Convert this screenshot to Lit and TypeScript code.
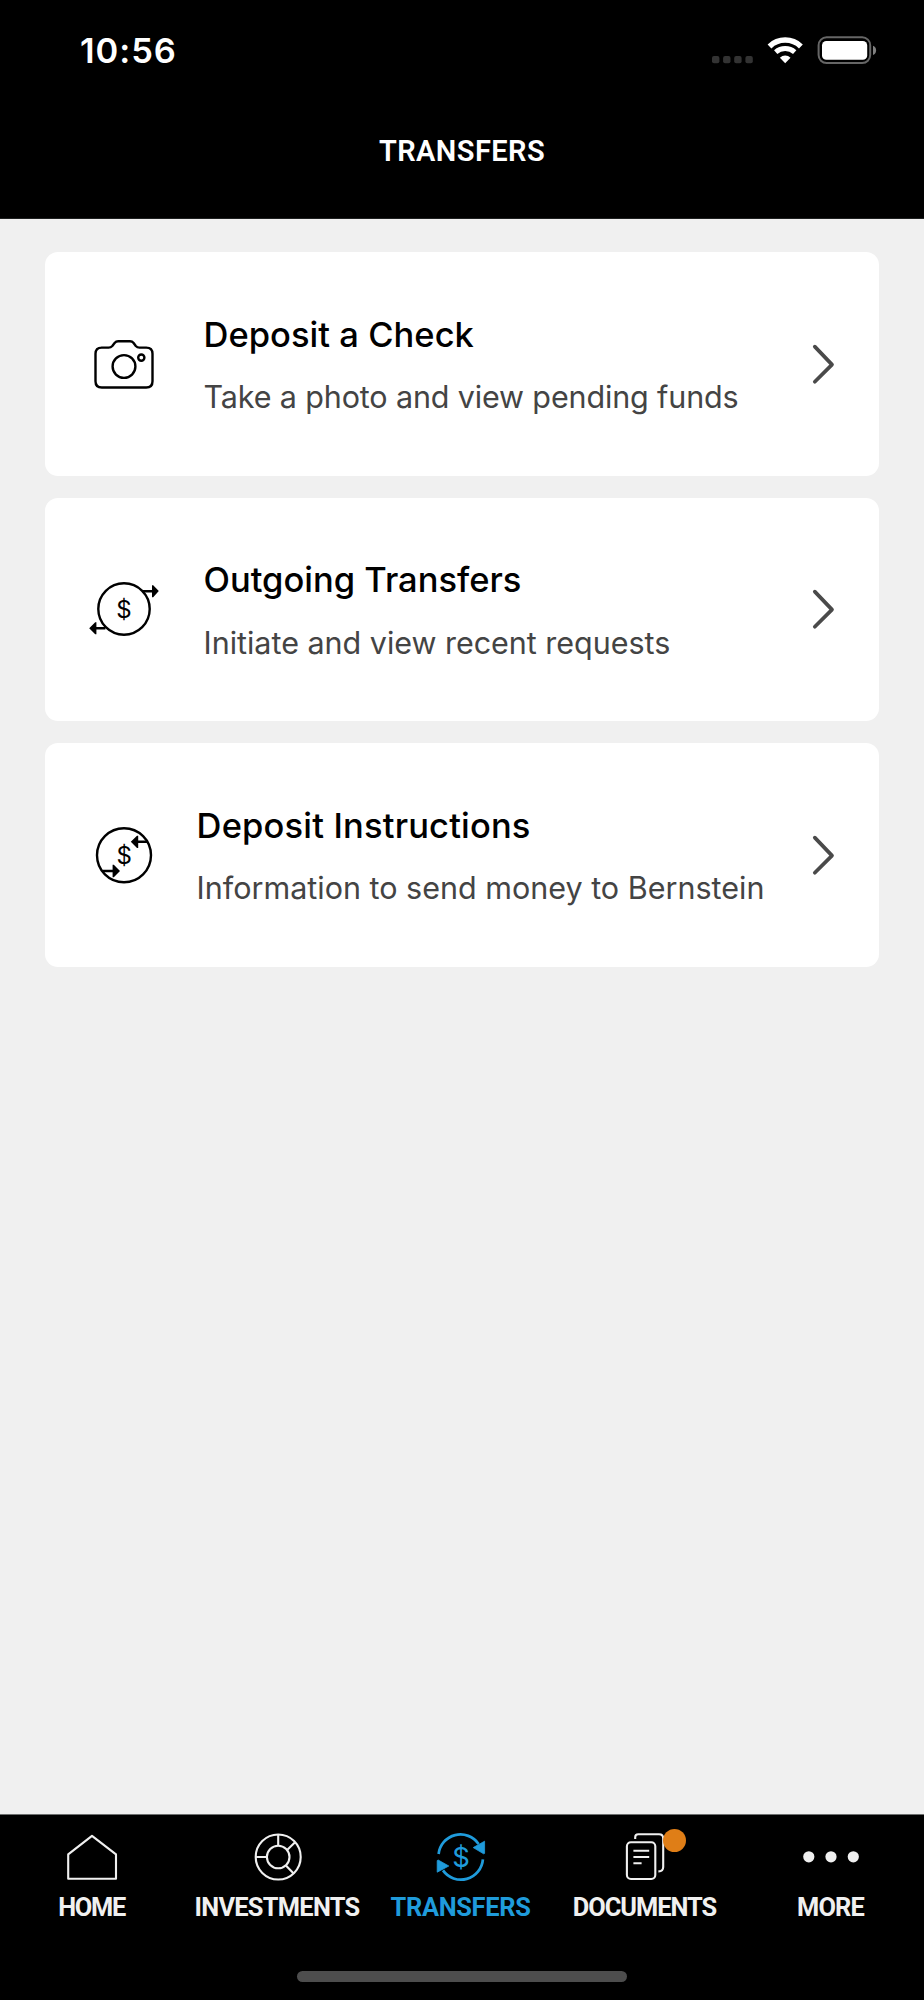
import { LitElement, html, svg, css } from "lit";
import { customElement, property } from "lit/decorators.js";
import { classMap } from "lit/directives/class-map.js";
import { styleMap } from "lit/directives/style-map.js";

interface TransferOption {
  title: string;
  titleSpacing: number;
  detail: string;
  detailSpacing: number;
  icon: unknown;
  narrowGap?: boolean;
}

interface Tab {
  label: string;
  spacing: number;
  icon: unknown;
  active?: boolean;
  badge?: boolean;
}

const spacing = (px: number) => styleMap({ "letter-spacing": `${px}px` });

/* Card icons: 72x72 box centred on (36, 36). */
const cameraIcon = svg`
  <g fill="none" stroke="#000" stroke-width="2.4" stroke-linejoin="round">
    <path d="M13.5 19.6H20.6C22.3 19.6 23.2 19.2 24.3 18L26.6 15C27.6 13.8 28.6 13.3 30.2 13.3H42C43.6 13.3 44.6 13.8 45.6 15L47.8 18C48.9 19.2 49.8 19.6 51.5 19.6H58.2C62.2 19.6 64.5 21.9 64.5 25.8V53.2C64.5 57.2 62.2 59.5 58.2 59.5H13.8C9.8 59.5 7.5 57.2 7.5 53.2V25.8C7.5 21.9 9.8 19.6 13.8 19.6Z"/>
    <circle cx="36" cy="38.5" r="11.4"/>
    <circle cx="53.3" cy="29.6" r="3.1"/>
  </g>`;

const outgoingIcon = svg`
  <circle cx="36" cy="36" r="25.7" fill="none" stroke="#000" stroke-width="2.4"/>
  <path d="M54.6 18.2H65M17.4 55.2H7" stroke="#000" stroke-width="2.4"/>
  <path d="M64 12.2H65.2L70.8 18L65.2 24.2H64ZM8.4 49.2H7.2L1.2 55.2L7.2 61.2H8.4Z"/>
  <text class="dollar" x="36" y="44.5">$</text>`;

const instructionsIcon = svg`
  <circle cx="36" cy="36.2" r="27" fill="none" stroke="#000" stroke-width="2.4"/>
  <path d="M59.8 22.8H49M14.2 52H25" stroke="#000" stroke-width="2.4"/>
  <path d="M50.2 16.8H49L42.8 22.8L49 29H50.2ZM24.6 45.8H25.8L32 52L25.8 58.2H24.6Z"/>
  <text class="dollar" x="36.3" y="45">$</text>`;

/* Tab icons: 60x60 box centred on (30, 30). */
const homeIcon = svg`
  <path d="M30 8.8L54 27.4V51.7H6.2V27.4Z" fill="none" stroke="currentColor" stroke-width="2.1" stroke-linejoin="round"/>`;

const investmentsIcon = svg`
  <g fill="none" stroke="currentColor" stroke-width="2.1">
    <circle cx="31.2" cy="30" r="22.5"/>
    <circle cx="31.2" cy="30" r="11.3"/>
    <path d="M31.2 7.5V18.7M8.7 30H19.9M40.1 23L47.8 15.6M38.9 38.4L46.4 46.2"/>
  </g>`;

const transfersIcon = svg`
  <g fill="none" stroke="currentColor" stroke-width="2.7">
    <path d="M7.6 27A22 22 0 0 1 47.6 17"/>
    <path d="M51.9 32.4A22 22 0 0 1 12 43.4"/>
  </g>
  <path d="M42.2 20.6L53.6 14.2V26.4L52.6 26.8ZM17.8 39L6.2 45.2V33.6L7.2 33Z" fill="currentColor" stroke="currentColor" stroke-width="0.8" stroke-linejoin="round"/>
  <text class="dollar" x="30" y="39.8" fill="currentColor">$</text>`;

const documentsIcon = svg`
  <g fill="none" stroke="currentColor" stroke-width="2.1">
    <rect x="11.9" y="15.2" width="28.4" height="36.8" rx="4"/>
    <path d="M20.2 12V10.3Q20.2 7.3 23.2 7.3H44Q48.2 7.3 48.2 11.5V40Q48.2 44.4 43.6 44.4H43.4"/>
    <path d="M18.4 23.7H34.2M18.4 30H34.2M18.4 36.2H26.6"/>
  </g>`;

const moreIcon = svg`
  <g fill="currentColor">
    <circle cx="7.8" cy="29.8" r="5.6"/>
    <circle cx="30" cy="29.8" r="5.6"/>
    <circle cx="52.3" cy="29.8" r="5.6"/>
  </g>`;

@customElement("status-bar")
class StatusBar extends LitElement {
  static styles = css`
    :host {
      display: flex;
      justify-content: space-between;
      padding: 29.5px 47px 0 80px;
      height: 72.5px;
      color: #fff;
    }
    .time {
      font: 600 34.5px/42px Inter, sans-serif;
      letter-spacing: 0.95px;
    }
    svg { display: block; margin-top: 2.5px; }
  `;
  render() {
    return html`
      <span class="time">10:56</span>
      <svg width="166" height="36" viewBox="711 32 166 36">
        <g fill="#333">
          ${[712, 723.1, 734.2, 745.4].map(x => svg`<rect x=${x} y="56" width="7.4" height="7.3" rx="2"/>`)}
        </g>
        <g fill="none" stroke="#fff">
          <path d="M769.5 46.4A22.7 22.7 0 0 1 800.9 46.4" stroke-width="5.5"/>
          <path d="M775.7 52.1A14.4 14.4 0 0 1 794.7 52.1" stroke-width="5"/>
        </g>
        <path d="M779.9 57.7A7.8 7.8 0 0 1 790.5 57.7L785.2 63.3Z" fill="#fff"/>
        <rect x="818.6" y="37.3" width="51.6" height="25.8" rx="8" fill="none" stroke="#666" stroke-width="2"/>
        <rect x="822" y="41" width="45.2" height="18.8" rx="4.4" fill="#fff"/>
        <path d="M873 45.8Q876.1 47 876.1 50.4T873 55Z" fill="#808080"/>
      </svg>`;
  }
}

@customElement("option-card")
class OptionCard extends LitElement {
  @property({ attribute: false }) option!: TransferOption;

  static styles = css`
    :host {
      display: flex;
      align-items: center;
      box-sizing: border-box;
      height: 223.6px;
      padding: 0 32px 0 43px;
      border-radius: 13px;
      background: #fff;
      font-family: Inter, sans-serif;
    }
    .icon { flex: none; display: block; }
    .dollar {
      font: 400 24px Inter, sans-serif;
      text-anchor: middle;
    }
    .text { flex: 1; padding-top: 2.2px; margin-left: 43.5px; white-space: nowrap; }
    .text.near { margin-left: 36.6px; }
    .title {
      font-size: 34.5px;
      font-weight: 500;
      line-height: 44px;
      color: #000;
    }
    .detail {
      margin-top: 20.5px;
      font-size: 30.5px;
      line-height: 40px;
      color: #444;
    }
    .chevron { flex: none; display: block; }
  `;
  render() {
    const o = this.option;
    return html`
      <svg class="icon" width="72" height="72" viewBox="0 0 72 72">${o.icon}</svg>
      <div class=${classMap({ text: true, near: !!o.narrowGap })}>
        <div class="title" style=${spacing(o.titleSpacing)}>${o.title}</div>
        <div class="detail" style=${spacing(o.detailSpacing)}>${o.detail}</div>
      </div>
      <svg class="chevron" width="36" height="44" viewBox="0 0 36 44">
        <path d="M3.8 4.6L21 22.6L3.8 39.8" fill="none" stroke="#4a4a4a" stroke-width="3.7" stroke-linecap="round" stroke-linejoin="round"/>
      </svg>`;
  }
}

@customElement("tab-bar")
class TabBar extends LitElement {
  @property({ attribute: false }) tabs: Tab[] = [];

  static styles = css`
    :host {
      display: flex;
      flex-direction: column;
      justify-content: space-between;
      align-items: stretch;
      box-sizing: border-box;
      height: 186px;
      padding: 12px 0 18px;
      border-top: 1px solid #6d6f6f;
      background: #000;
    }
    .tabs {
      display: grid;
      grid-template-columns: 185px 186px 181px 187px 185px;
      margin-left: -1px;
    }
    .tab {
      display: flex;
      flex-direction: column;
      align-items: center;
      color: #f0f0f0;
    }
    .tab.active { color: #1f9bdb; }
    .icon { position: relative; height: 60px; }
    .icon svg { display: block; }
    .badge {
      position: absolute;
      left: 48.4px;
      top: 2.4px;
      width: 23px;
      height: 23px;
      border-radius: 50%;
      background: #df7e17;
    }
    .dollar {
      font: 400 27.5px Inter, sans-serif;
      text-anchor: middle;
    }
    .label {
      margin-top: 4.8px;
      font: 700 25.4px/30px Roboto, sans-serif;
    }
    .indicator {
      align-self: center;
      width: 330px;
      height: 11px;
      border-radius: 6px;
      background: #4d4d4d;
    }
  `;
  render() {
    return html`
      <div class="tabs">
        ${this.tabs.map(t => html`
          <div class=${classMap({ tab: true, active: !!t.active })}>
            <div class="icon">
              <svg width="60" height="60" viewBox="0 0 60 60">${t.icon}</svg>
              ${t.badge ? html`<span class="badge"></span>` : null}
            </div>
            <span class="label" style=${spacing(t.spacing)}>${t.label}</span>
          </div>`)}
      </div>
      <div class="indicator"></div>`;
  }
}

@customElement("app-root")
class AppRoot extends LitElement {
  static styles = css`
    :host {
      display: flex;
      flex-direction: column;
      width: 924px;
      height: 2000px;
      background: #f0f0f0;
      overflow: hidden;
    }
    header {
      box-sizing: border-box;
      height: 219px;
      background: #000;
      border-bottom: 1px solid #1e2020;
    }
    status-bar { box-sizing: border-box; }
    h1 {
      margin: 60.6px 0 0;
      text-align: center;
      color: #fff;
      font: 600 29px/36px Roboto, sans-serif;
      letter-spacing: 0.43px;
    }
    main {
      flex: 1;
      display: flex;
      flex-direction: column;
      gap: 22px;
      padding: 33px 45px 0;
    }
  `;

  private options: TransferOption[] = [
    { title: "Deposit a Check", titleSpacing: 0.04, detail: "Take a photo and view pending funds", detailSpacing: -0.14, icon: cameraIcon },
    { title: "Outgoing Transfers", titleSpacing: 0, detail: "Initiate and view recent requests", detailSpacing: -0.02, icon: outgoingIcon },
    { title: "Deposit Instructions", titleSpacing: 0.17, detail: "Information to send money to Bernstein", detailSpacing: 0, icon: instructionsIcon, narrowGap: true },
  ];

  private tabs: Tab[] = [
    { label: "HOME", spacing: -1.3, icon: homeIcon },
    { label: "INVESTMENTS", spacing: -0.7, icon: investmentsIcon },
    { label: "TRANSFERS", spacing: -0.3, icon: transfersIcon, active: true },
    { label: "DOCUMENTS", spacing: -1.02, icon: documentsIcon, badge: true },
    { label: "MORE", spacing: -0.85, icon: moreIcon },
  ];

  render() {
    return html`
      <header>
        <status-bar></status-bar>
        <h1>TRANSFERS</h1>
      </header>
      <main>
        ${this.options.map(o => html`<option-card .option=${o}></option-card>`)}
      </main>
      <tab-bar .tabs=${this.tabs}></tab-bar>`;
  }
}
